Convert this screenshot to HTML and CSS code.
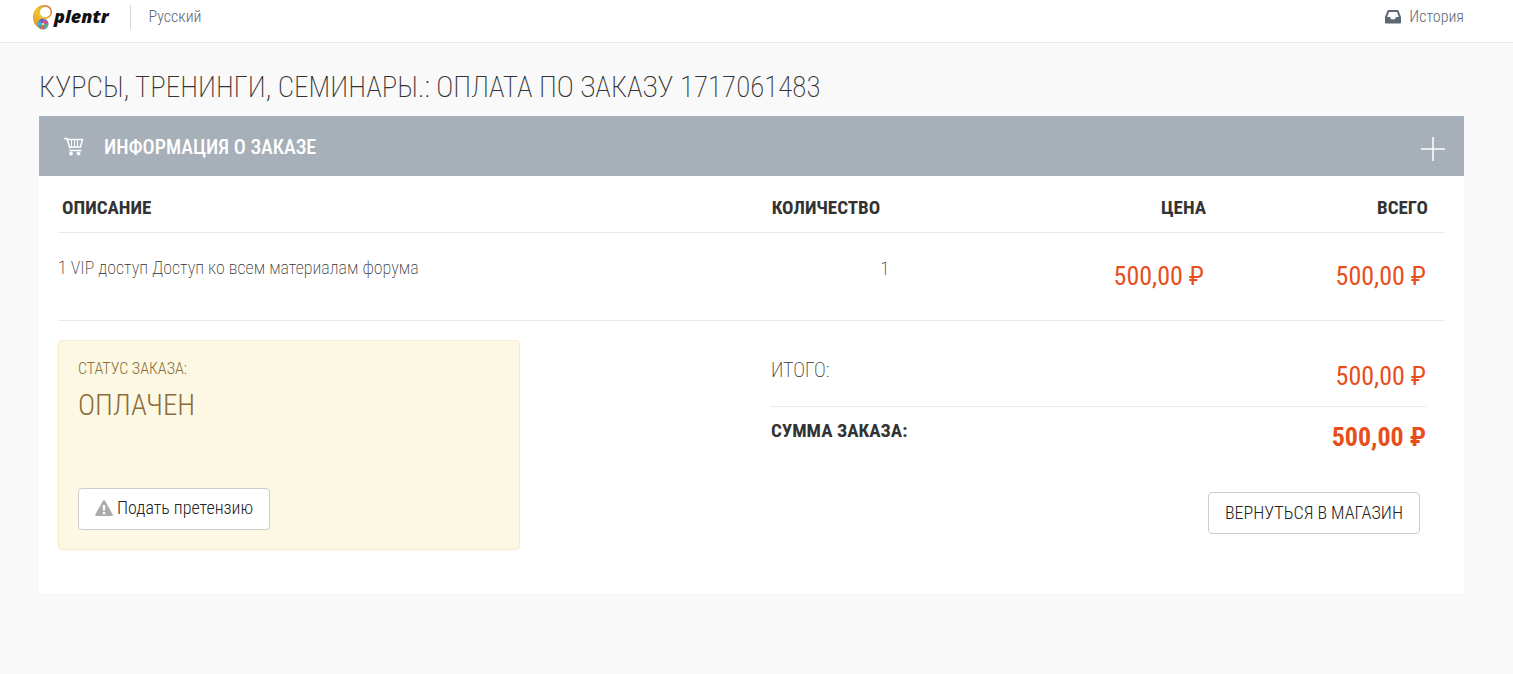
FILE: index.html
```html
<!DOCTYPE html>
<html lang="ru">
<head>
<meta charset="utf-8">
<meta name="viewport" content="width=device-width, initial-scale=1">
<title>Оплата по заказу 1717061483</title>
<link rel="stylesheet" href="styles.css">
</head>
<body>
<header class="topbar">
  <a class="logo" href="#" aria-label="oplentr">
    <svg class="logo-mark" viewBox="0 0 20 25" aria-hidden="true">
      <defs>
        <linearGradient id="ring" x1="0" y1="1" x2="1" y2="0">
          <stop offset="0" stop-color="#d98a26"/>
          <stop offset=".5" stop-color="#f0c62e"/>
          <stop offset="1" stop-color="#d86a4a"/>
        </linearGradient>
      </defs>
      <path fill="url(#ring)" fill-rule="evenodd" d="M11 0C16 0 19 2.500 19 7C19 11 16 14 12 14C9 14 8 17 8.500 24C3 22 0 18 0 12C0 5 5 0 11 0ZM12 2C9 2 7 4.500 7 7C7 10 9 12 12 12C15 12 17.500 10 17.500 7C17.500 4 15.500 2 12 2Z"/>
      <circle cx="10" cy="19" r="5.500" fill="#5b8fc4"/>
      <path fill="#e2448a" d="M10 19L12 14L15.500 18Z"/>
      <path fill="#58b95a" d="M10 19L15.500 20L13 23.500Z"/>
      <path fill="#e86b35" d="M10 19L11 24.500L7 23.500Z"/>
      <path fill="#42b5c9" d="M10 19L5 21L5 17Z"/>
      <path fill="#7256a5" d="M10 19L7 14.500L10 13.500Z"/>
      <circle cx="10" cy="19" r="1" fill="#fff"/>
    </svg>
    <span class="logo-name">plentr</span>
  </a>
  <a class="language" href="#">Русский</a>
  <a class="history" href="#">
    <svg class="history-icon" viewBox="0 0 16 14" aria-hidden="true">
      <path fill="#5d6876" fill-rule="evenodd" d="M3.500 0H12.500Q13.300 0 13.600 .7L16 7V12.500Q16 13.500 15 13.500H1Q0 13.500 0 12.500V7L2.400 .7Q2.700 0 3.500 0ZM4 2L2.200 7H5L6 9.200H10L11 7H13.800L12 2Z"/>
    </svg>
    <span>История</span>
  </a>
</header>
<main class="page">
  <h1 class="title">Курсы, тренинги, семинары.: Оплата по заказу 1717061483</h1>
  <section class="order">
    <div class="order-head">
      <svg class="cart" viewBox="0 0 20 19" fill="none" stroke="#fff" aria-hidden="true">
        <path stroke-width="1.500" d="M0 1.500H3L6 11.500M3 2.500H18.500L16.500 10H6M5.500 13.500H17.500"/>
        <path stroke-width="1" d="M7.500 3V10M10.500 3V10M13.500 3V10"/>
        <circle cx="7" cy="16.500" r="1.500" fill="#fff" stroke-width="1"/>
        <circle cx="14.500" cy="16.500" r="1.500" fill="#fff" stroke-width="1"/>
      </svg>
      <h2 class="order-title">Информация о заказе</h2>
      <button class="toggle" type="button" aria-label="Развернуть">
        <svg class="plus" viewBox="0 0 24 24" aria-hidden="true"><path d="M12 0V24M0 12H24" stroke="#fff" stroke-width="1.500"/></svg>
      </button>
    </div>
    <div class="order-body">
      <table class="items">
        <thead>
          <tr><th class="col-name">Описание</th><th class="col-count">Количество</th><th class="col-price">Цена</th><th class="col-total">Всего</th></tr>
        </thead>
        <tbody>
          <tr><td>1 VIP доступ Доступ ко всем материалам форума</td><td class="count">1</td><td class="money">500,00 ₽</td><td class="money">500,00 ₽</td></tr>
        </tbody>
      </table>
      <div class="summary">
        <div class="status">
          <p class="status-label">Статус заказа:</p>
          <p class="status-value">Оплачен</p>
          <button class="button" type="button">
            <svg class="warning" viewBox="0 0 18 16" aria-hidden="true">
              <path fill="#aaa" d="M9 0Q9.600 0 10 .7L17.800 14.700Q18.200 16 17 16H1Q-.2 16 .2 14.700L8 .7Q8.400 0 9 0Z"/>
              <path fill="#fff" d="M7.600 5H10.400L10 10.800H8ZM7.800 12H10.200V14.200H7.800Z"/>
            </svg>
            <span>Подать претензию</span>
          </button>
        </div>
        <div class="totals">
          <dl class="sums">
            <div class="sum"><dt>Итого:</dt><dd class="money">500,00 ₽</dd></div>
            <div class="sum sum-final"><dt>Сумма заказа:</dt><dd class="money">500,00 ₽</dd></div>
          </dl>
          <button class="button button-return" type="button">Вернуться в магазин</button>
        </div>
      </div>
    </div>
  </section>
</main>
</body>
</html>
```
FILE: styles.css
```css
* { box-sizing: border-box; }
body {
  margin: 0;
  background: #f9f9f9;
  color: #333;
  font-family: "Roboto Condensed", Roboto, sans-serif;
  font-size: 18px;
  font-weight: 300;
  line-height: 24px;
}
h1, h2, p, dl, dd { margin: 0; }
a { color: #5d6876; text-decoration: none; }
button { font: inherit; color: inherit; cursor: pointer; }
svg { display: block; flex: none; }

.topbar {
  display: flex;
  align-items: center;
  height: 43px;
  padding: 0 49px 8px 33px;
  border-bottom: 1px solid #ebebeb;
  background: #fff;
  font-size: 16px;
}
.logo { display: flex; align-items: center; gap: 1px; color: #111; }
.logo-mark { width: 20px; height: 25px; }
.logo-name {
  font-family: "Open Sans", sans-serif;
  font-size: 18px;
  font-weight: 800;
  font-style: italic;
  line-height: 22px;
  padding-bottom: 2px;
}
.language {
  margin-left: 21px;
  padding-left: 18px;
  border-left: 1px solid #d5d5d5;
}
.history { display: flex; align-items: center; gap: 8px; margin-left: auto; }
.history-icon { width: 16px; height: 14px; }

.page { padding: 24px 49px 81px 39px; }
.title {
  font-size: 29px;
  font-weight: 200;
  line-height: 40px;
  text-transform: uppercase;
}
.order { margin-top: 9px; background: #fff; }
.order-head {
  display: flex;
  align-items: center;
  min-height: 60px;
  padding: 0 19px 0 25px;
  background: #a7afb9;
  color: #fff;
}
.cart { width: 20px; height: 19px; }
.order-title {
  margin-left: 20px;
  padding-top: 2px;
  font-size: 20px;
  font-weight: 500;
  text-transform: uppercase;
}
.toggle { margin-left: auto; padding: 6px 0 0; border: 0; background: none; }
.plus { width: 24px; height: 24px; }

.order-body { padding: 0 19px 43px; }
.items { width: 100%; border-collapse: collapse; table-layout: fixed; }
.items th {
  padding: 20px 17px 12px 4px;
  border-bottom: 1px solid #ebebeb;
  font-size: 19px;
  font-weight: 700;
  text-align: right;
  text-transform: uppercase;
}
.items .col-name { width: 36%; text-align: left; }
.col-count { width: 24.5%; }
.col-price { width: 23.5%; }
.col-total { width: 16%; }
.items td {
  height: 88px;
  padding: 23px 0 0;
  border-bottom: 1px solid #ebebeb;
  vertical-align: top;
  font-weight: 200;
}
.items .count { padding: 24px 8px 0 0; text-align: right; }
.items .money { padding: 26px 19px 0 0; }
.money, .items .money {
  color: #e84e1b;
  font-size: 26px;
  font-weight: 400;
  line-height: 34px;
  text-align: right;
}

.summary {
  display: flex;
  justify-content: space-between;
  padding: 19px 18px 0 0;
}
.status {
  display: flex;
  flex-direction: column;
  align-items: flex-start;
  flex: 0 0 462px;
  min-height: 210px;
  padding: 16px 19px 19px;
  border: 1px solid #faebcc;
  border-radius: 4px;
  background: #fcf8e3;
  color: #8a6d3b;
  text-transform: uppercase;
}
.status-label { font-size: 16px; }
.status-value { font-size: 29px; line-height: 48px; }
.button {
  display: flex;
  align-items: center;
  gap: 4px;
  height: 42px;
  padding: 0 16px 2px;
  border: 1px solid #ccc;
  border-radius: 4px;
  background: #fff;
  color: #222;
  font-size: 18px;
  font-weight: 300;
}
.status .button { margin-top: auto; text-transform: none; }
.warning { width: 18px; height: 16px; }
.totals {
  display: flex;
  flex-direction: column;
  flex: 0 0 48%;
  padding-top: 18px;
  text-transform: uppercase;
}
.sum {
  display: flex;
  justify-content: space-between;
  height: 48px;
  padding: 0 1px;
  font-size: 20px;
  font-weight: 200;
}
.sum-final {
  height: 86px;
  padding-top: 12px;
  border-top: 1px solid #ebebeb;
  font-size: 19px;
}
.sum-final, .sum-final .money { font-weight: 700; }
.sum .money { padding-top: 1px; }
.button-return { align-self: flex-end; margin-right: 7px; padding-bottom: 0; text-transform: uppercase; }
```
